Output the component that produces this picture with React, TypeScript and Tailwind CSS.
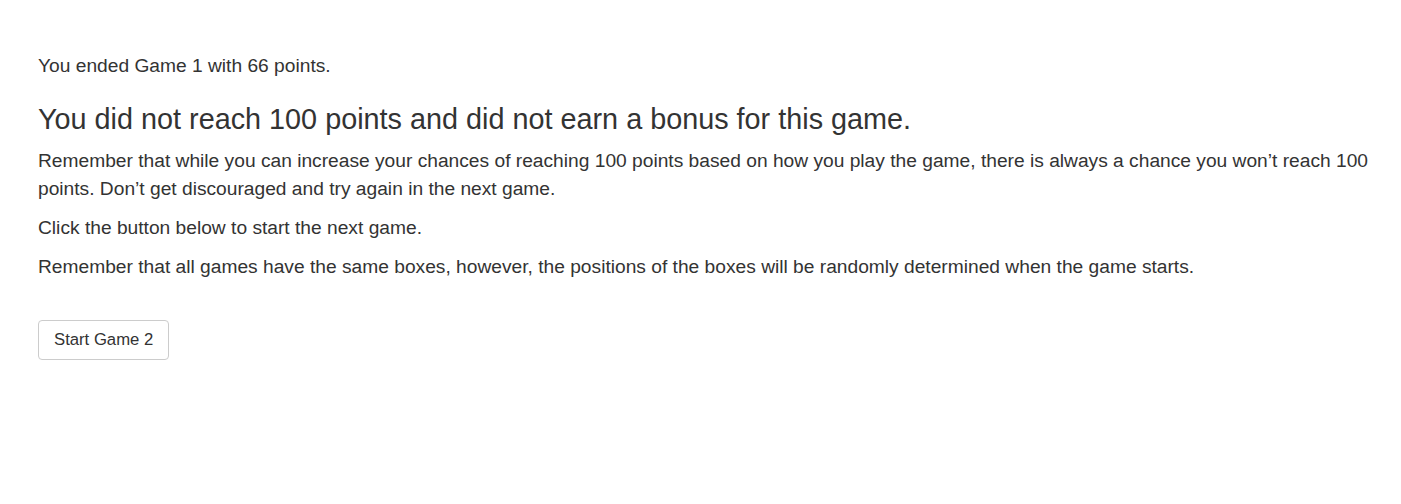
import React from "react";

export default function App() {
  return (
    <div className="min-h-[504px] bg-white pl-[38px] pr-[20px] pt-[52px] text-[19.2px] leading-[28px] text-[#333333]" style={{ fontFamily: '"Liberation Sans", Arial, sans-serif' }}>
      <p className="mb-[10px]">You ended Game 1 with 66 points.</p>
      <h3 className="mb-[11px] mt-[22px] text-[28.8px] leading-[34px] font-normal">
        You did not reach 100 points and did not earn a bonus for this game.
      </h3>
      <p className="mb-[11px]">
        Remember that while you can increase your chances of reaching 100 points based on how you play the game, there is always a chance you won’t reach 100 points. Don’t get discouraged and try again in the next game.
      </p>
      <p className="mb-[11px]">Click the button below to start the next game.</p>
      <p className="mb-[11px]">
        Remember that all games have the same boxes, however, the positions of the boxes will be randomly determined when the game starts.
      </p>
      <button className="mt-[28px] h-[40px] rounded-[4px] border border-[#cccccc] bg-white px-[15px] text-[16.7px] text-[#333333]">
        Start Game 2
      </button>
    </div>
  );
}
